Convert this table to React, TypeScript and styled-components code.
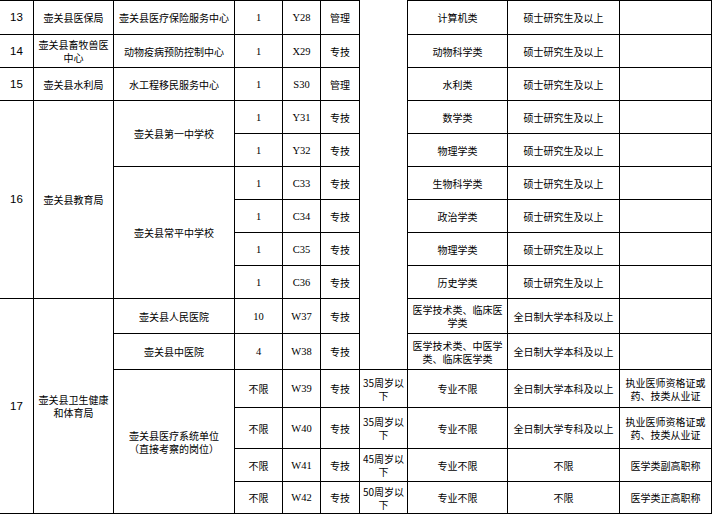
import React from "react";
import styled, { createGlobalStyle } from "styled-components";

const GlobalStyle = createGlobalStyle`
  html, body {
    margin: 0;
    padding: 0;
    background: #fff;
  }
  body {
    font-family: "Noto Sans CJK SC", "Liberation Sans", sans-serif;
    color: #000;
  }
`;

const Sheet = styled.div`
  display: grid;
  grid-template-columns: 34px 80px 121px 48px 38px 39px 48px 100px 112px 92px;
  grid-template-rows: 35px repeat(8, 33px) 35px 36px 38px 41px 33px 32px;
  width: 712px;
`;

type Kind = "cjk" | "serif" | "index";

const fontFor = (kind: Kind) => {
  if (kind === "serif") return `font-family: "Liberation Serif", serif; font-size: 10.5px;`;
  if (kind === "index") return `font-family: "Liberation Sans", sans-serif; font-size: 11.5px;`;
  return `font-family: "Noto Sans CJK SC", sans-serif; font-size: 10px;`;
};

const Cell = styled.div<{
  $col: number;
  $row: number;
  $rows: number;
  $kind: Kind;
  $open: boolean;
}>`
  grid-column: ${(p) => p.$col};
  grid-row: ${(p) => p.$row} / span ${(p) => p.$rows};
  box-sizing: border-box;
  display: flex;
  align-items: center;
  justify-content: center;
  text-align: center;
  white-space: pre-line;
  padding: 0 2px;
  line-height: 13px;
  border-right: 1px solid #000;
  border-bottom: 1px solid #000;
  border-top: ${(p) => (p.$row === 1 && !p.$open ? "1px solid #000" : "none")};
  ${(p) => fontFor(p.$kind)}
`;

interface ICell {
  c: number;
  r: number;
  rs?: number;
  k?: Kind;
  open?: boolean;
  text: string;
}

const master = "硕士研究生及以上";
const cert = "执业医师资格证或药、技类从业证";

const cells: ICell[] = [
  // 13
  { c: 1, r: 1, k: "index", text: "13" },
  { c: 2, r: 1, text: "壶关县医保局" },
  { c: 3, r: 1, text: "壶关县医疗保险服务中心" },
  { c: 4, r: 1, k: "serif", text: "1" },
  { c: 5, r: 1, k: "serif", text: "Y28" },
  { c: 6, r: 1, text: "管理" },
  { c: 7, r: 1, rs: 11, open: true, text: "" },
  { c: 8, r: 1, text: "计算机类" },
  { c: 9, r: 1, text: master },
  { c: 10, r: 1, text: "" },
  // 14
  { c: 1, r: 2, k: "index", text: "14" },
  { c: 2, r: 2, text: "壶关县畜牧兽医中心" },
  { c: 3, r: 2, text: "动物疫病预防控制中心" },
  { c: 4, r: 2, k: "serif", text: "1" },
  { c: 5, r: 2, k: "serif", text: "X29" },
  { c: 6, r: 2, text: "专技" },
  { c: 8, r: 2, text: "动物科学类" },
  { c: 9, r: 2, text: master },
  { c: 10, r: 2, text: "" },
  // 15
  { c: 1, r: 3, k: "index", text: "15" },
  { c: 2, r: 3, text: "壶关县水利局" },
  { c: 3, r: 3, text: "水工程移民服务中心" },
  { c: 4, r: 3, k: "serif", text: "1" },
  { c: 5, r: 3, k: "serif", text: "S30" },
  { c: 6, r: 3, text: "管理" },
  { c: 8, r: 3, text: "水利类" },
  { c: 9, r: 3, text: master },
  { c: 10, r: 3, text: "" },
  // 16
  { c: 1, r: 4, rs: 6, k: "index", text: "16" },
  { c: 2, r: 4, rs: 6, text: "壶关县教育局" },
  { c: 3, r: 4, rs: 2, text: "壶关县第一中学校" },
  { c: 3, r: 6, rs: 4, text: "壶关县常平中学校" },
];

const school: [string, string][] = [
  ["Y31", "数学类"],
  ["Y32", "物理学类"],
  ["C33", "生物科学类"],
  ["C34", "政治学类"],
  ["C35", "物理学类"],
  ["C36", "历史学类"],
];

school.forEach(([code, major], i) => {
  const r = 4 + i;
  cells.push(
    { c: 4, r, k: "serif", text: "1" },
    { c: 5, r, k: "serif", text: code },
    { c: 6, r, text: "专技" },
    { c: 8, r, text: major },
    { c: 9, r, text: master },
    { c: 10, r, text: "" }
  );
});

cells.push(
  { c: 1, r: 10, rs: 6, k: "index", text: "17" },
  { c: 2, r: 10, rs: 6, text: "壶关县卫生健康和体育局" },
  { c: 3, r: 10, text: "壶关县人民医院" },
  { c: 4, r: 10, k: "serif", text: "10" },
  { c: 5, r: 10, k: "serif", text: "W37" },
  { c: 6, r: 10, text: "专技" },
  { c: 8, r: 10, text: "医学技术类、临床医学类" },
  { c: 9, r: 10, text: "全日制大学本科及以上" },
  { c: 10, r: 10, text: "" },
  { c: 3, r: 11, text: "壶关县中医院" },
  { c: 4, r: 11, k: "serif", text: "4" },
  { c: 5, r: 11, k: "serif", text: "W38" },
  { c: 6, r: 11, text: "专技" },
  { c: 8, r: 11, text: "医学技术类、中医学类、临床医学类" },
  { c: 9, r: 11, text: "全日制大学本科及以上" },
  { c: 10, r: 11, text: "" },
  { c: 3, r: 12, rs: 4, text: "壶关县医疗系统单位\n（直接考察的岗位）" }
);

const hospital: [string, string, string, string][] = [
  ["W39", "35周岁以下", "全日制大学本科及以上", cert],
  ["W40", "35周岁以下", "全日制大学专科及以上", cert],
  ["W41", "45周岁以下", "不限", "医学类副高职称"],
  ["W42", "50周岁以下", "不限", "医学类正高职称"],
];

hospital.forEach(([code, age, edu, other], i) => {
  const r = 12 + i;
  cells.push(
    { c: 4, r, text: "不限" },
    { c: 5, r, k: "serif", text: code },
    { c: 6, r, text: "专技" },
    { c: 7, r, text: age },
    { c: 8, r, text: "专业不限" },
    { c: 9, r, text: edu },
    { c: 10, r, text: other }
  );
});

export default function App() {
  return (
    <>
      <GlobalStyle />
      <Sheet>
        {cells.map((cell, i) => (
          <Cell
            key={i}
            $col={cell.c}
            $row={cell.r}
            $rows={cell.rs ?? 1}
            $kind={cell.k ?? "cjk"}
            $open={!!cell.open}
          >
            {cell.text}
          </Cell>
        ))}
      </Sheet>
    </>
  );
}
